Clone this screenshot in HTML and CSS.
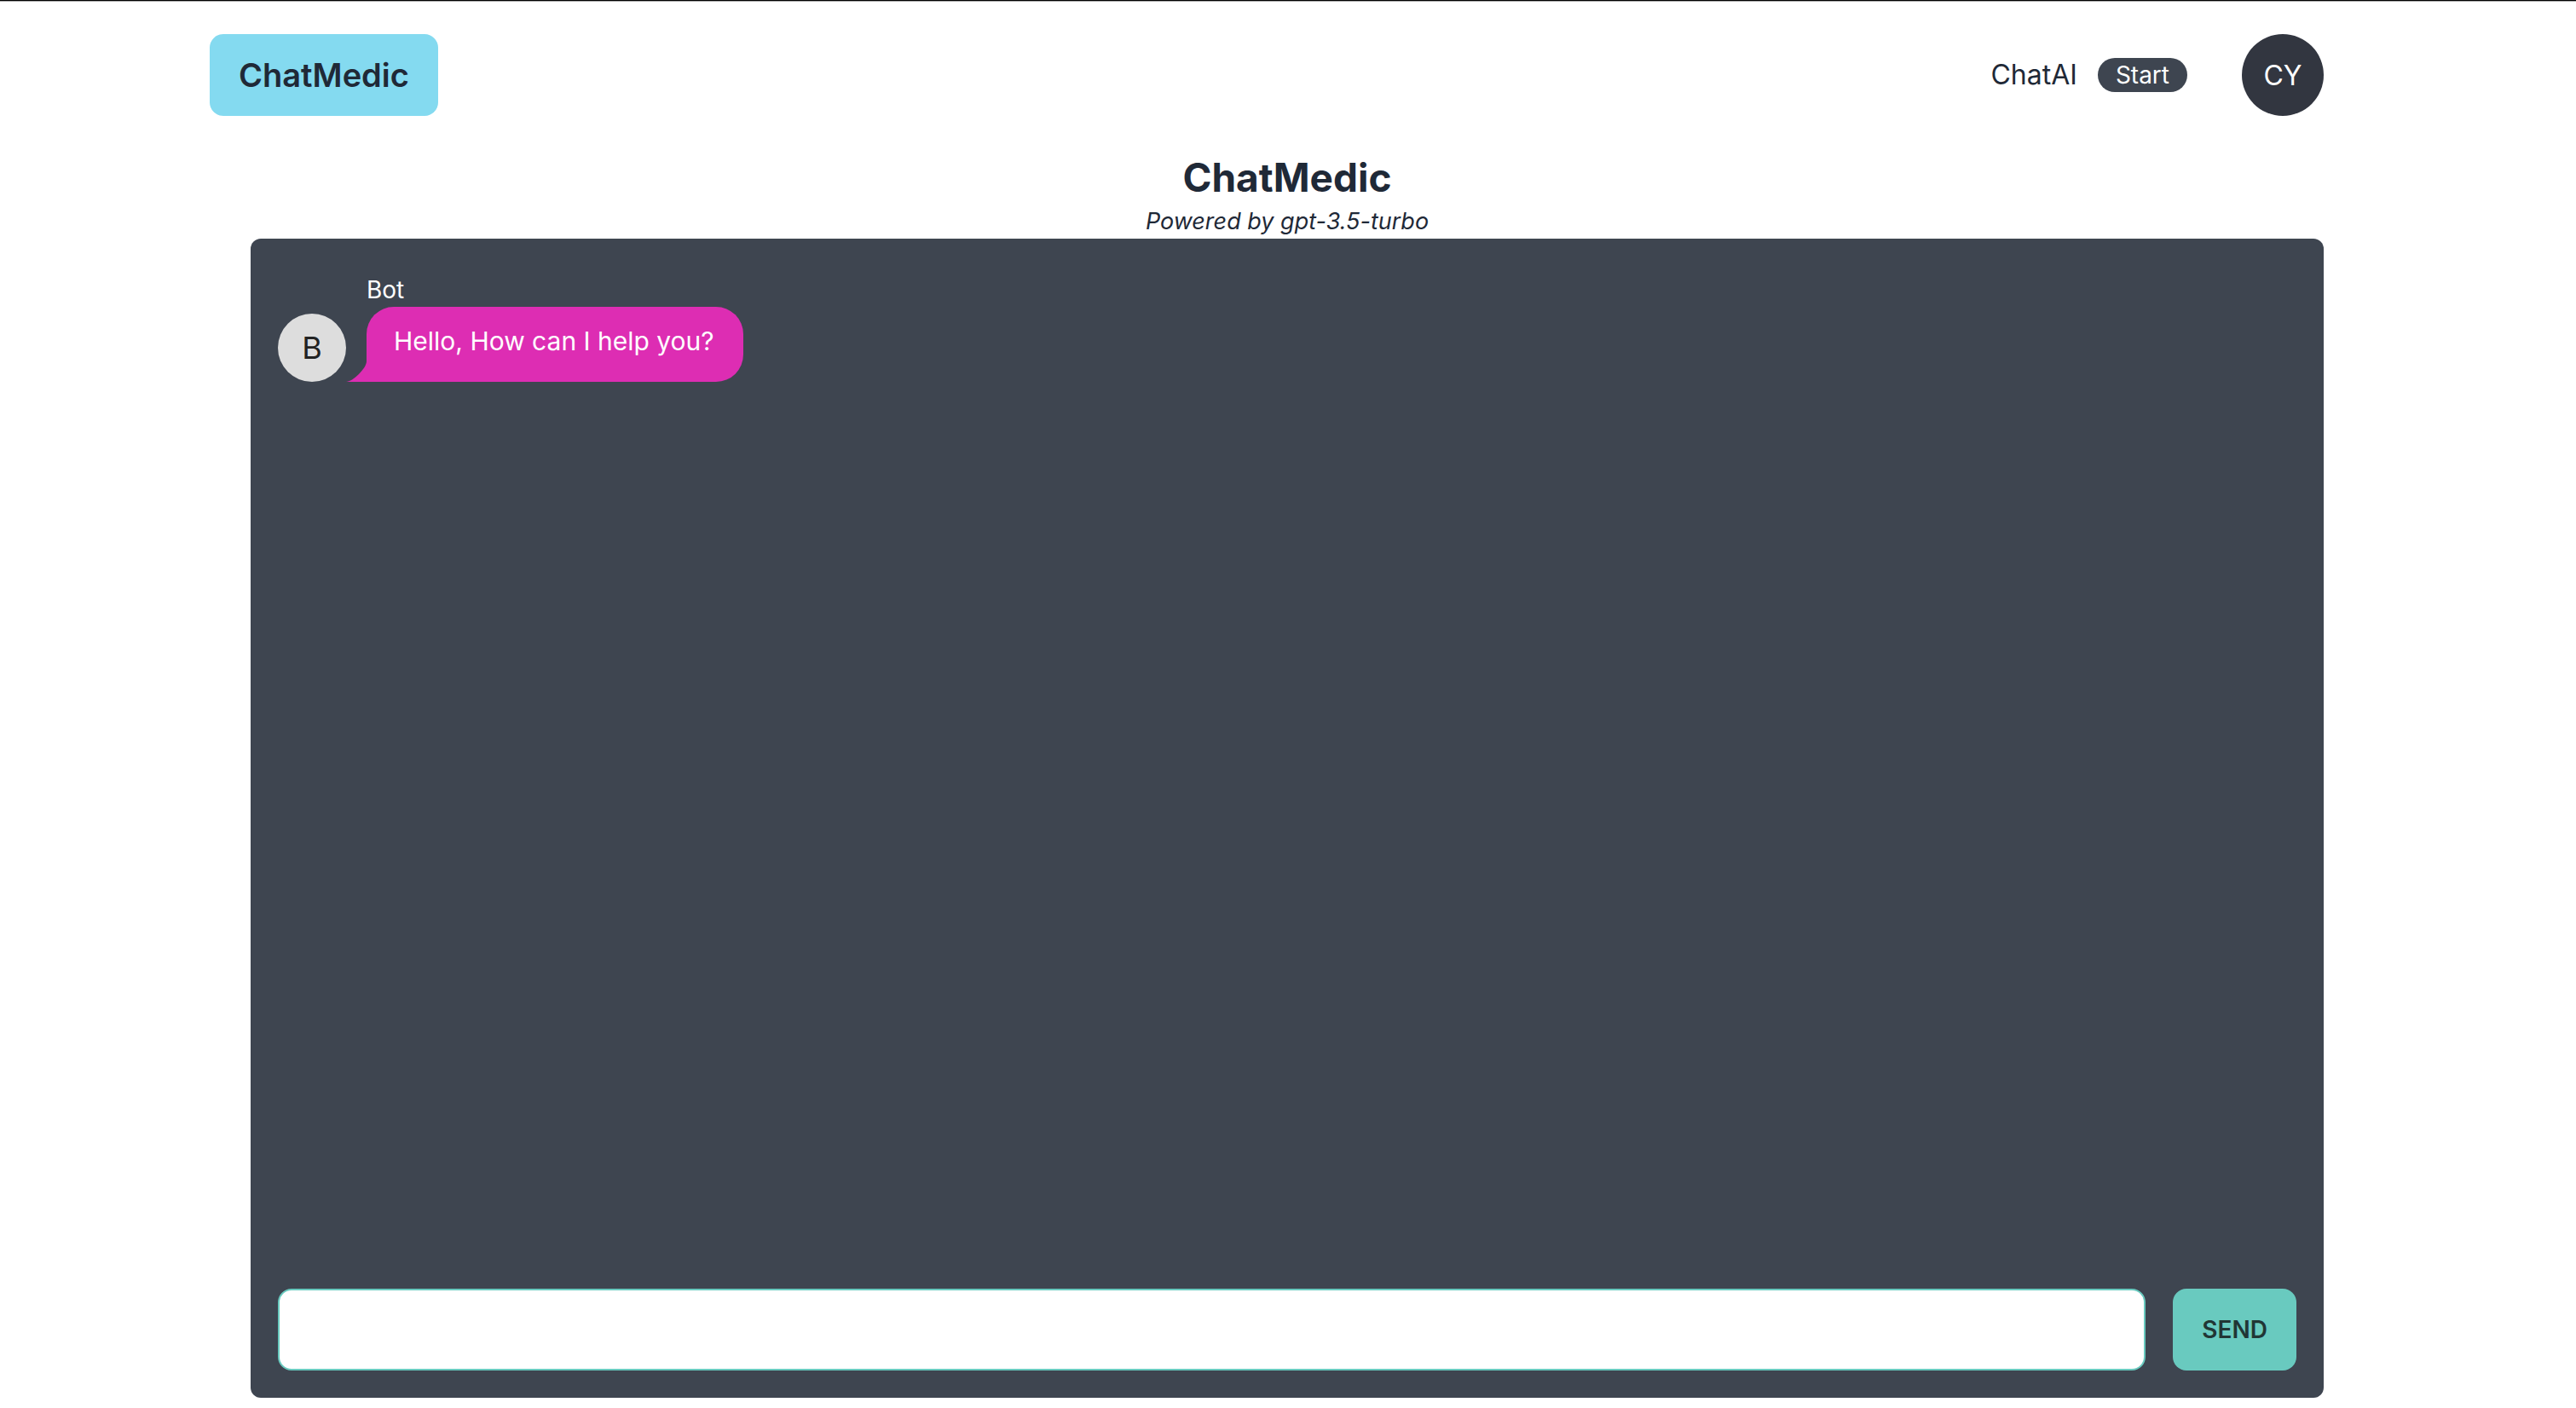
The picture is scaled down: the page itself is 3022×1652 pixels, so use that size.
FILE: index.html
```html
<!DOCTYPE html>
<html lang="en">
<head>
  <meta charset="utf-8">
  <meta name="viewport" content="width=device-width, initial-scale=1">
  <title>ChatMedic</title>
  <link rel="stylesheet" href="styles.css">
</head>
<body>
  <div class="page">
    <header class="navbar">
      <a class="brand" href="#">ChatMedic</a>
      <nav class="menu">
        <a class="menu-link" href="#">ChatAI <span class="badge">Start</span></a>
        <button class="avatar avatar-user" type="button">CY</button>
      </nav>
    </header>
    <main class="main">
      <h1 class="title">ChatMedic</h1>
      <p class="subtitle">Powered by gpt-3.5-turbo</p>
      <section class="panel" aria-label="Conversation">
        <div class="chat">
          <div class="avatar avatar-bot">B</div>
          <div class="message">
            <div class="sender">Bot</div>
            <div class="bubble">
              Hello, How can I help you?
              <svg class="tail" viewBox="0 0 3 3" aria-hidden="true"><path d="M0 3H3V0C3 1 1 3 0 3"/></svg>
            </div>
          </div>
        </div>
        <form class="composer">
          <input class="field" type="text" aria-label="Message">
          <button class="send" type="submit">SEND</button>
        </form>
      </section>
    </main>
  </div>
</body>
</html>
```
FILE: styles.css
```css
* {
  box-sizing: border-box;
}

html {
  height: 100%;
}

body {
  min-height: 100%;
  margin: 0;
  padding-right: 2px;
  display: flex;
  background: linear-gradient(#000 1px, #aaa 1px, #aaa 2px, #fff 2px);
  color: #1f2937;
  font-family: Inter, "Liberation Sans", sans-serif;
  font-size: 32px;
  line-height: 48px;
}

.page {
  flex: 1;
  display: flex;
  flex-direction: column;
  max-width: 2560px;
  margin: 0 auto;
  padding: 0 16px 12px;
}

.navbar {
  display: flex;
  align-items: center;
  justify-content: space-between;
  padding: 40px 48px 40px 0;
}

.brand {
  padding: 24px 34px;
  border-radius: 16px;
  background: #84daf0;
  color: inherit;
  font-size: 38px;
  font-weight: 600;
  text-decoration: none;
}

.menu {
  display: flex;
  align-items: center;
  gap: 64px;
}

.menu-link {
  display: flex;
  align-items: center;
  gap: 24px;
  color: inherit;
  text-decoration: none;
}

.badge {
  padding: 0 21px;
  border-radius: 20px;
  background: #3e4550;
  color: #fff;
  font-size: 28px;
  line-height: 40px;
}

.avatar {
  display: flex;
  flex: none;
  align-items: center;
  justify-content: center;
  padding: 0;
  border: 0;
  border-radius: 50%;
  font-family: inherit;
}

.avatar-user {
  width: 96px;
  height: 96px;
  background: #323640;
  color: #fff;
  font-size: 32px;
}

.avatar-bot {
  width: 80px;
  height: 80px;
  background: #ddd;
  color: #222;
  font-size: 36px;
}

.main {
  flex: 1;
  display: flex;
  flex-direction: column;
  padding: 0 48px;
}

.title {
  margin: 0;
  font-size: 46px;
  font-weight: 700;
  line-height: 64px;
  text-align: center;
}

.subtitle {
  margin: 0;
  font-size: 27px;
  font-style: italic;
  line-height: 40px;
  text-align: center;
}

.panel {
  flex: 1;
  display: flex;
  flex-direction: column;
  justify-content: space-between;
  padding: 40px 32px 32px;
  border-radius: 12px;
  background: #3e4550;
}

.chat {
  display: flex;
  align-items: flex-end;
  gap: 24px;
  color: #fff;
}

.sender {
  font-size: 28px;
  line-height: 40px;
}

.bubble {
  position: relative;
  min-height: 88px;
  padding: 16px 34px 16px 32px;
  border-radius: 32px 32px 32px 0;
  background: #dd2db3;
  font-size: 30px;
}

.tail {
  position: absolute;
  right: 100%;
  bottom: 0;
  width: 24px;
  height: 24px;
  fill: #dd2db3;
}

.composer {
  display: flex;
  gap: 32px;
}

.field {
  flex: 1;
  min-width: 0;
  height: 96px;
  padding: 0 32px;
  border: 2px solid #69cabf;
  border-radius: 16px;
  background: #fff;
  color: inherit;
  font: inherit;
}

.send {
  height: 96px;
  padding: 0 34px;
  border: 0;
  border-radius: 16px;
  background: #69cabf;
  color: #213635;
  font-family: inherit;
  font-size: 28px;
  font-weight: 600;
}
```
